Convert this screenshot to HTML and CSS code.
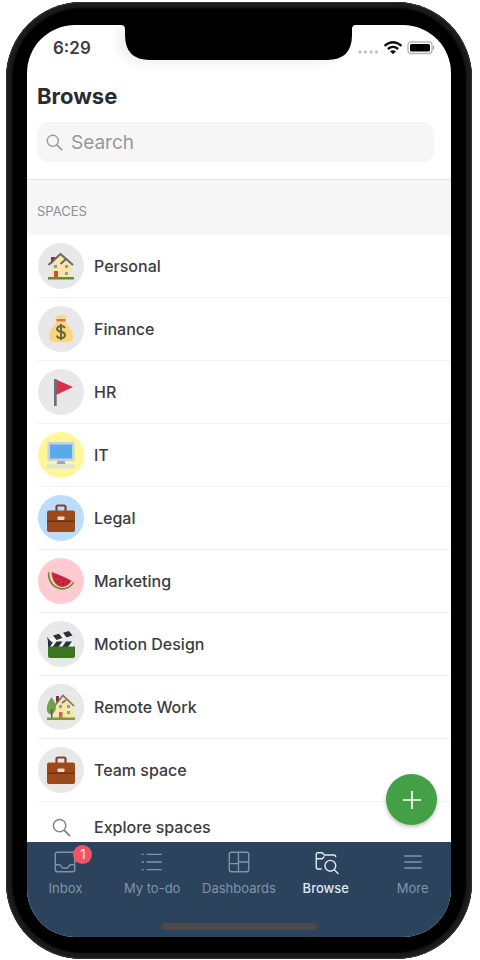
FILE: index.html
```
<!DOCTYPE html>
<html lang="en">
<head>
    <meta charset="UTF-8">
    <meta name="viewport" content="width=device-width, initial-scale=1.0">
    <title>Browse</title>
    <link rel="stylesheet" href="styles.css">
</head>
<body>
    <!-- Shared icons -->
    <svg class="sprite" aria-hidden="true">
        <symbol id="briefcase" viewBox="0 0 28 28">
            <path d="M9.500 8V3.200Q9.500 1.500 11 1.500h6q1.500 0 1.500 1.700V8" fill="none" stroke="#854127" stroke-width="2.200"/>
            <rect y="6.500" width="28" height="21.500" rx="2" fill="#9c4a1a"/>
            <path d="M0 16.500h28v1.500H0z" fill="#6e3218"/>
            <rect x="10.500" y="12.500" width="7" height="3.500" rx="1" fill="#f3d9c4"/>
        </symbol>
        <symbol id="glass" viewBox="0 0 20 20">
            <circle cx="8" cy="8" r="6.500" fill="none" stroke="currentColor" stroke-width="1.600"/>
            <path d="M12.700 12.700l6.300 6.300" stroke="currentColor" stroke-width="2"/>
        </symbol>
        <symbol id="house" viewBox="0 0 28 28">
            <path d="M4 5h4v7H4z" fill="#8d2b45"/>
            <path d="M4 12l9.500-9 11 9.500V25H4z" fill="#fbe6a5"/>
            <path d="M1.500 13L13.500 2l12.500 11M13.500 12l5.500-5" fill="none" stroke="#67686d" stroke-width="2"/>
            <path d="M7 13h3v3H7zM18 13h3v3h-3zM18 20h3v3h-3z" fill="#62a8d0"/>
            <path d="M7 19h4v6H7z" fill="#b65b35"/>
            <path d="M1 25h26v2.500H1z" fill="#678b3a"/>
        </symbol>
    </svg>

    <div class="phone">
        <div class="screen">
            <svg class="notch" viewBox="0 0 233 36" aria-hidden="true">
                <path d="M0 0h233q-4 0-4 4v6q0 25-25 25H27Q2 35 2 10V4q0-4-4-4z"/>
            </svg>

            <div class="status">
                <span class="time">6:29</span>
                <svg class="signal" viewBox="0 0 76 16" aria-hidden="true">
                    <g fill="#c4c4c4"><circle cx="2" cy="12" r="1.700"/><circle cx="7.500" cy="12" r="1.700"/><circle cx="13" cy="12" r="1.700"/><circle cx="18.500" cy="12" r="1.700"/></g>
                    <g fill="none" stroke="#111" stroke-width="2.300">
                        <path d="M26.500 5.800q8.500-7 17 0"/>
                        <path d="M29.800 9q5.200-4.200 10.400 0"/>
                    </g>
                    <path d="M32 11.200q3-2 6 0l-3 3z" fill="#111"/>
                    <rect x="50" y="2" width="24" height="11.500" rx="3" fill="#fff" stroke="#b5b5b5" stroke-width="1.300"/>
                    <rect x="52" y="4" width="20" height="7.500" rx="1.500" fill="#000"/>
                    <path d="M75.500 6v3.500" stroke="#999"/>
                </svg>
            </div>

            <header class="header">
                <h1>Browse</h1>
                <form class="search">
                    <svg aria-hidden="true"><use href="#glass"/></svg>
                    <input type="search" placeholder="Search" aria-label="Search">
                </form>
            </header>

            <h2 class="section">SPACES</h2>

            <ul class="spaces">
                <li><a href="#">
                    <span class="avatar"><svg><use href="#house"/></svg></span>
                    Personal
                </a></li>
                <li><a href="#">
                    <span class="avatar"><svg viewBox="0 0 28 28">
                        <path d="M8 1q6-1.500 12 0l-2 7h-8z" fill="#f9d98c"/>
                        <path d="M9 8h10q7 7 7 13.500Q26 27 20 27H8q-6 0-6-5.500Q2 15 9 8z" fill="#f9d67b"/>
                        <path d="M9.500 4h9v2.500h-9z" fill="#df7148"/>
                        <path d="M18 13q-1-2-4-2t-4 2.700q0 2.300 4 3.100t4 3.200q0 3-4 3t-4-2.500M14 9v16" fill="none" stroke="#6a653e" stroke-width="2"/>
                    </svg></span>
                    Finance
                </a></li>
                <li><a href="#">
                    <span class="avatar"><svg viewBox="0 0 28 28">
                        <path d="M9 1.500L26 9 9 17z" fill="#dc2f48"/>
                        <path d="M7 1h2.700v27H7z" fill="#68717d"/>
                    </svg></span>
                    HR
                </a></li>
                <li><a href="#">
                    <span class="avatar yellow"><svg viewBox="0 0 28 28">
                        <rect x=".500" y="1" width="27" height="19" rx="1" fill="#c5d3dc"/>
                        <path d="M3 3.500h22v14H3z" fill="#58aaea"/>
                        <path d="M10.500 20h7l1 3h-9z" fill="#98a9b4"/>
                        <rect y="23.500" width="28" height="4" rx="1" fill="#dde2e1"/>
                    </svg></span>
                    IT
                </a></li>
                <li><a href="#">
                    <span class="avatar blue"><svg><use href="#briefcase"/></svg></span>
                    Legal
                </a></li>
                <li><a href="#">
                    <span class="avatar pink"><svg viewBox="0 0 28 28">
                        <path d="M1 5C-1 21 18 30 27.500 15.500z" fill="#6f8748"/>
                        <path d="M2.500 5C1.500 19 17 27.500 26 15z" fill="#f7dca9"/>
                        <path d="M0 3.500L4 5 25 13.500 28.500 16z" fill="#ffcbd0"/>
                        <path d="M4.500 5C5 20 17.500 25 24.500 14Q22 12 16 9.500T4.500 5z" fill="#cc2640"/>
                        <g fill="#741b31"><circle cx="9" cy="10" r=".800"/><circle cx="13" cy="11" r=".800"/><circle cx="11" cy="15" r=".800"/><circle cx="17" cy="13" r=".800"/><circle cx="16" cy="17" r=".800"/><circle cx="21" cy="14.500" r=".800"/></g>
                    </svg></span>
                    Marketing
                </a></li>
                <li><a href="#">
                    <span class="avatar"><svg viewBox="0 0 28 28">
                        <path d="M1 9l23-7 1 4.500-23 7z" fill="#f4f6f7"/>
                        <path d="M2 12.500h24V17H2z" fill="#f4f6f7"/>
                        <path d="M6 5.500l6-1.800 3.500 4.200-6 2zM16 2.800l6-1.800 3.500 4.600-6 1.900zM0 7l4.500 5-3 1.500zM9.500 11.500h6L11.500 17H5.500zM19 11.500h6L21 17h-6zM1 12h5l-3 5H1z" fill="#27323b"/>
                        <path d="M1 16.500h27V26q0 2-2 2H3q-2 0-2-2z" fill="#3c7420"/>
                    </svg></span>
                    Motion Design
                </a></li>
                <li><a href="#">
                    <span class="avatar"><svg viewBox="0 0 28 28">
                        <path d="M9 3h3v6H9z" fill="#8d2b45"/>
                        <path d="M8 13l9-10 4 1 6 8v14H8z" fill="#fbe6a5"/>
                        <path d="M7 13.500L16 2.500l11 10.500M15 10l4-3" fill="none" stroke="#737278" stroke-width="1.700"/>
                        <path d="M12 12h3v3h-3zM20 12h3v3h-3zM20 18h3v3h-3z" fill="#62a8d0"/>
                        <path d="M12 19h3.500v6H12z" fill="#c66b48"/>
                        <path d="M4.500 4q7 10 3 15t-7 0T4.500 4z" fill="#6fa34b"/>
                        <path d="M4 16h1.500v9H4z" fill="#805336"/>
                        <path d="M0 24.500h28V27H0z" fill="#7d9a3f"/>
                    </svg></span>
                    Remote Work
                </a></li>
                <li><a href="#">
                    <span class="avatar"><svg><use href="#briefcase"/></svg></span>
                    Team space
                </a></li>
                <li class="explore"><a href="#">
                    <span class="icon"><svg><use href="#glass"/></svg></span>
                    Explore spaces
                </a></li>
            </ul>

            <div class="bottom">
                <button class="add" type="button" aria-label="Add">
                    <svg viewBox="0 0 20 20"><path d="M10 1v18M1 10h18"/></svg>
                </button>
                <nav class="tabs">
                    <a href="#">
                        <span class="tab-icon">
                            <svg viewBox="0 0 24 24"><rect x="3" y="3" width="18" height="18" rx="2"/><path d="M3 14.500h3.500q1.500 0 2 1.500t1.500 1.500h4q1 0 1.500-1.500t2-1.500H21"/></svg>
                            <span class="badge">1</span>
                        </span>
                        Inbox
                    </a>
                    <a href="#">
                        <span class="tab-icon"><svg viewBox="0 0 24 24"><path d="M7 5h14M7 12h14M7 19h14M2.500 5h2M2.500 12h2M2.500 19h2"/></svg></span>
                        My to-do
                    </a>
                    <a href="#">
                        <span class="tab-icon"><svg viewBox="0 0 24 24"><rect x="3" y="3" width="18" height="18" rx="2"/><path d="M11.500 3v18M3 13.500h8.500M11.500 12H21"/></svg></span>
                        Dashboards
                    </a>
                    <a href="#" class="active">
                        <span class="tab-icon"><svg viewBox="0 0 24 24"><path d="M8 18.500H5q-2 0-2-2V5q0-1.500 1.500-1.500h4l2 2H19q2 0 2 2M3 9h5.500l2-2"/><circle cx="16" cy="15.500" r="5"/><path d="M19.700 19.200L23.500 23"/></svg></span>
                        Browse
                    </a>
                    <a href="#">
                        <span class="tab-icon"><svg viewBox="0 0 24 24"><path d="M4 6.500h16M4 12h16M4 17.500h16"/></svg></span>
                        More
                    </a>
                </nav>
                <div class="home-bar"></div>
            </div>
        </div>
    </div>
</body>
</html>
```
FILE: styles.css
```
* {
    box-sizing: border-box;
}
body {
    margin: 0;
    padding: 2px 8px 1px 6px;
    background-color: #fff;
    font-family: Inter, "Liberation Sans", sans-serif;
    color: #3c3c3f;
}
a {
    color: inherit;
    text-decoration: none;
}
.sprite {
    position: absolute;
    width: 0;
    height: 0;
}
.phone {
    max-width: 560px;
    margin: auto;
    padding: 23px 21px 22px;
    background: #000;
    border-radius: 76px;
    box-shadow: inset 0 0 0 1px #333, inset 0 0 2px 6px #1b1b1b;
}
.screen {
    position: relative;
    overflow: hidden;
    background: #fff;
    border-radius: 48px;
}
.notch {
    position: absolute;
    top: 0;
    left: 50%;
    width: 233px;
    height: 36px;
    margin-left: -116px;
    overflow: visible;
    filter: drop-shadow(-8px 3px 5px rgba(0, 0, 0, 0.06));
}

/* Status bar and header */
.status {
    display: flex;
    justify-content: space-between;
    align-items: center;
    height: 45px;
    padding: 0 17px 0 26px;
}
.time {
    font-size: 17px;
    font-weight: 600;
}
.signal {
    width: 76px;
    height: 16px;
}
.header {
    padding: 10px 17px 17px 10px;
}
h1 {
    margin: 0 0 10px;
    font-size: 22px;
    line-height: 32px;
    font-weight: 700;
    color: #2b2b2d;
}
.search {
    display: flex;
    align-items: center;
    gap: 8px;
    height: 40px;
    padding: 0 9px;
    background: #f6f6f6;
    border-radius: 11px;
    color: #98989b;
}
.search svg {
    width: 17px;
    height: 17px;
}
.search input {
    flex: 1;
    min-width: 0;
    padding: 0;
    border: none;
    outline: none;
    background: none;
    font-family: inherit;
    font-size: 19px;
}
.search input::placeholder {
    color: #98989b;
}
.section {
    margin: 0;
    padding: 24px 10px 16px;
    border-top: 1px solid #e4e4e4;
    background: #f6f6f6;
    font-size: 13px;
    line-height: 15px;
    font-weight: 400;
    color: #919194;
}

/* List of spaces */
.spaces {
    margin: 0;
    padding: 0 0 0 11px;
    list-style: none;
}
.spaces li {
    border-bottom: 1px solid #f2f2f2;
}
.spaces a {
    display: flex;
    align-items: center;
    gap: 10px;
    height: 62px;
    font-size: 16px;
    font-weight: 500;
}
.avatar, .icon {
    display: flex;
    align-items: center;
    justify-content: center;
    width: 46px;
    height: 46px;
    border-radius: 50%;
}
.avatar {
    background: #e8e8e8;
}
.avatar svg {
    width: 28px;
    height: 28px;
}
.yellow {
    background: #fff797;
}
.blue {
    background: #b9ddfa;
}
.pink {
    background: #ffcbd0;
}
.spaces .explore {
    border: none;
}
.explore a {
    height: 40px;
    padding-top: 10px;
}
.icon {
    height: 20px;
    color: #87878a;
}
.icon svg {
    width: 19px;
    height: 19px;
}

/* Bottom bar */
.bottom {
    position: relative;
    padding: 7px 0;
    background: #2c435d;
}
.add {
    position: absolute;
    top: -68px;
    right: 14px;
    display: flex;
    align-items: center;
    justify-content: center;
    width: 51px;
    height: 51px;
    padding: 0;
    border: none;
    border-radius: 50%;
    background: #43a047;
    box-shadow: 0 2px 4px rgba(0, 0, 0, 0.25);
    cursor: pointer;
}
.add svg {
    width: 20px;
    height: 20px;
    stroke: #fff;
    stroke-width: 1.7;
}
.tabs {
    display: grid;
    grid-template-columns: repeat(5, 1fr);
    margin: 0 -5px;
}
.tabs a {
    display: flex;
    flex-direction: column;
    align-items: center;
    gap: 3px;
    height: 74px;
    font-size: 13px;
    line-height: 20px;
    font-weight: 400;
    color: #8294a8;
}
.tabs .active {
    font-weight: 500;
    color: #dfe8f3;
}
.tab-icon {
    position: relative;
    height: 26px;
}
.tab-icon svg {
    width: 26px;
    height: 26px;
    fill: none;
    stroke: currentColor;
    stroke-width: 1.3;
}
.badge {
    position: absolute;
    top: -4px;
    right: -14px;
    width: 19px;
    height: 19px;
    border-radius: 50%;
    background: #f25561;
    font-size: 13px;
    line-height: 19px;
    text-align: center;
    color: #fff;
}
.home-bar {
    width: 156px;
    height: 7px;
    margin: 0 auto;
    border-radius: 4px;
    background: #4c4a4d;
}
```
